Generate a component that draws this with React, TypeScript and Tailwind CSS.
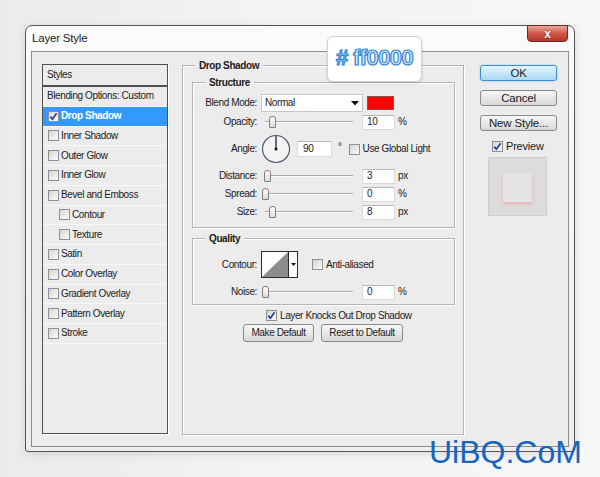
import React from 'react';

type Kid = { children?: React.ReactNode };

function Check({ checked = false }: { checked?: boolean }) {
  return (
    <span className="flex h-[11px] w-[11px] shrink-0 items-center justify-center border border-[#8f8f8f] bg-gradient-to-br from-[#d6d6d6] to-[#fbfbfb]">
      {checked && (
        <svg width="9" height="9" viewBox="0 0 9 9">
          <path d="M1.3 4.6 L3.4 7.2 L7.6 1.2" fill="none" stroke="#1f3f9a" strokeWidth="1.7" />
        </svg>
      )}
    </span>
  );
}

// thumb = px offset from slider's left edge
function Slider({ thumb }: { thumb: number }) {
  return (
    <div className="relative ml-[5px] h-[14px] w-[91px] shrink-0">
      <div className="absolute left-[3px] right-0 top-[6px] h-[2px] border-t border-b border-t-[#a9a9a9] border-b-white" />
      <div
        className="absolute top-[1px] h-[12px] w-[7px] rounded-t-[3px] rounded-b-[1px] border border-[#7d7d7d] bg-gradient-to-b from-white to-[#dcdcdc]"
        style={{ left: thumb }}
      />
    </div>
  );
}

function NumBox({ value }: { value: string }) {
  return (
    <div className="ml-[9px] flex h-[15px] w-[33px] shrink-0 items-center border border-[#dadada] border-t-[#b9b9b9] bg-white pl-[4px]">
      {value}
    </div>
  );
}

function Label({ children }: Kid) {
  return <span className="w-[64px] shrink-0 text-right">{children}</span>;
}

function Legend({ children }: Kid) {
  return <div className="-mt-[6px] ml-[12px] w-fit bg-[#ececec] px-[4px] font-bold">{children}</div>;
}

function SliderRow({ label, thumb, value, unit, mt }: { label: string; thumb: number; value: string; unit: string; mt: string }) {
  return (
    <div className={`flex h-[16px] items-center ${mt}`}>
      <Label>{label}</Label>
      <Slider thumb={thumb} />
      <NumBox value={value} />
      <span className="ml-[3px]">{unit}</span>
    </div>
  );
}

function Btn({ children, w }: Kid & { w: string }) {
  return (
    <div className={`flex h-[18px] items-center justify-center rounded-[3px] border border-[#8a8a8a] bg-gradient-to-b from-[#f6f6f6] via-[#e9e9e9] to-[#d6d6d6] ${w}`}>
      {children}
    </div>
  );
}

const styleRows: { name: string; indent?: boolean; on?: boolean }[] = [
  { name: 'Drop Shadow', on: true },
  { name: 'Inner Shadow' },
  { name: 'Outer Glow' },
  { name: 'Inner Glow' },
  { name: 'Bevel and Emboss' },
  { name: 'Contour', indent: true },
  { name: 'Texture', indent: true },
  { name: 'Satin' },
  { name: 'Color Overlay' },
  { name: 'Gradient Overlay' },
  { name: 'Pattern Overlay' },
  { name: 'Stroke' },
];

export default function App() {
  return (
    <div className="relative h-[477px] w-[600px] overflow-hidden bg-gradient-to-r from-[#ebebeb] via-[#f4f4f4] to-[#f7f7f7] pl-[25px] pt-[25px] text-[10px] leading-[12px] tracking-[-0.4px] text-[#1b1b1b] [font-family:'Liberation_Sans',Arial,sans-serif]">
      {/* Window */}
      <div className="flex h-[427px] w-[550px] flex-col rounded-t-[7px] rounded-b-[3px] border border-[#555] bg-gradient-to-b from-[#fbfbfb] to-[#ededed] shadow-[0_2px_8px_rgba(0,0,0,0.12)]">
        {/* Title bar */}
        <div className="flex h-[25px] shrink-0 items-start justify-between">
          <span className="pl-[6px] pt-[6px] text-[11.5px] leading-[13px] tracking-[-0.2px] text-[#222]">Layer Style</span>
          <div className="-mt-px mr-[6px] flex h-[17px] w-[41px] items-center justify-center rounded-b-[4px] border border-[#6b2a22] bg-gradient-to-b from-[#e8a89c] via-[#d0564a] to-[#b8352a] text-[12px] font-bold leading-[12px] text-white [text-shadow:0_0_2px_#5a1a12]">
            x
          </div>
        </div>

        {/* Content */}
        <div className="mx-[5px] flex h-[396px] items-start border border-[#8c8c8c] bg-[#ececec] pl-[10px] pt-[12px]">
          {/* Styles list */}
          <div className="flex h-[370px] w-[126px] shrink-0 flex-col border border-[#505050] shadow-[1px_1px_0_#fff]">
            <div className="flex h-[22px] shrink-0 items-center border-b-2 border-[#505050] pl-[4px]">Styles</div>
            <div className="flex h-[19.75px] shrink-0 items-center border-b border-[#f8f8f8] pl-[4px]">Blending Options: Custom</div>
            {styleRows.map((r) => (
              <div
                key={r.name}
                className={`flex h-[19.75px] shrink-0 items-center gap-[2px] border-b border-[#f8f8f8] ${r.indent ? 'pl-[16px]' : 'pl-[5px]'} ${r.on ? 'bg-[#3399ff] font-bold text-white' : ''}`}
              >
                <Check checked={r.on} />
                <span>{r.name}</span>
              </div>
            ))}
          </div>

          {/* Drop Shadow group */}
          <div className="ml-[14px] mt-[1px] flex h-[370px] w-[282px] shrink-0 flex-col border border-[#b4b4b4] shadow-[inset_1px_1px_0_#fff,1px_1px_0_#fff]">
            <Legend>Drop Shadow</Legend>

            {/* Structure */}
            <div className="ml-[9px] mt-[10px] flex h-[146px] w-[263px] flex-col border border-[#b4b4b4] shadow-[inset_1px_1px_0_#fff,1px_1px_0_#fff]">
              <Legend>Structure</Legend>

              <div className="mt-[5px] flex h-[18px] items-center">
                <Label>Blend Mode:</Label>
                <div className="ml-[4px] flex h-[18px] w-[102px] items-center justify-between border border-[#c6c6c6] bg-white pl-[3px] pr-[3px]">
                  <span>Normal</span>
                  <svg width="8" height="5" viewBox="0 0 8 5">
                    <path d="M0 0 H8 L4 4.5 Z" fill="#111" />
                  </svg>
                </div>
                <div className="ml-[4px] h-[14px] w-[27px] border border-[#8a5050] bg-[#ff0000]" />
              </div>

              <SliderRow label="Opacity:" thumb={7} value="10" unit="%" mt="mt-[2px]" />

              <div className="mt-[3px] flex h-[32px] items-center">
                <Label>Angle:</Label>
                <svg className="ml-[4px] shrink-0" width="30" height="30" viewBox="0 0 30 30">
                  <circle cx="15" cy="15" r="13.5" fill="#f3f3f3" stroke="#4a5672" strokeWidth="1.2" />
                  <line x1="15" y1="15" x2="15" y2="2" stroke="#111" strokeWidth="1.2" />
                  <circle cx="15" cy="15" r="1.5" fill="#111" />
                </svg>
                <div className="ml-[6px] flex h-[16px] w-[35px] items-center border border-[#dadada] border-t-[#b9b9b9] bg-white pl-[5px]">90</div>
                <span className="ml-[6px] -mt-[4px]">°</span>
                <span className="ml-[7px]"><Check /></span>
                <span className="ml-[3px]">Use Global Light</span>
              </div>

              <SliderRow label="Distance:" thumb={2} value="3" unit="px" mt="mt-[3px]" />
              <SliderRow label="Spread:" thumb={0} value="0" unit="%" mt="mt-[2px]" />
              <SliderRow label="Size:" thumb={7} value="8" unit="px" mt="mt-[2px]" />
            </div>

            {/* Quality */}
            <div className="ml-[9px] mt-[10px] flex h-[67px] w-[263px] flex-col border border-[#b4b4b4] shadow-[inset_1px_1px_0_#fff,1px_1px_0_#fff]">
              <Legend>Quality</Legend>

              <div className="mt-[6px] flex h-[27px] items-center">
                <Label>Contour:</Label>
                <div className="ml-[4px] flex h-[27px] w-[37px] border border-[#2a2a2a] bg-white">
                  <svg width="26" height="25" viewBox="0 0 26 25">
                    <polygon points="0,25 26,0 26,25" fill="#8c8c8c" />
                  </svg>
                  <div className="flex flex-1 items-center justify-center border-l border-[#2a2a2a]">
                    <svg width="5" height="3" viewBox="0 0 5 3">
                      <path d="M0 0 H5 L2.5 3 Z" fill="#111" />
                    </svg>
                  </div>
                </div>
                <span className="ml-[14px]"><Check /></span>
                <span className="ml-[3px]">Anti-aliased</span>
              </div>

              <SliderRow label="Noise:" thumb={0} value="0" unit="%" mt="mt-[6px]" />
            </div>

            <div className="ml-[83px] mt-[4px] flex h-[13px] items-center">
              <Check checked />
              <span className="ml-[3px]">Layer Knocks Out Drop Shadow</span>
            </div>

            <div className="ml-[60px] mt-[2px] flex gap-[7px]">
              <Btn w="w-[71px]">Make Default</Btn>
              <Btn w="w-[82px]">Reset to Default</Btn>
            </div>
          </div>

          {/* Right column */}
          <div className="ml-[16px] mt-[1px] flex w-[77px] shrink-0 flex-col text-[11.5px] tracking-[-0.2px]">
            <div className="flex h-[16px] items-center justify-center rounded-[3px] border border-[#3d8ed6] bg-gradient-to-b from-[#e4f4fd] to-[#a9d8f5] shadow-[0_0_2px_#7fc2f0]">OK</div>
            <div className="mt-[9px] flex h-[16px] items-center justify-center rounded-[3px] border border-[#8a8a8a] bg-gradient-to-b from-[#f6f6f6] to-[#d8d8d8]">Cancel</div>
            <div className="mt-[9px] flex h-[16px] items-center justify-center rounded-[3px] border border-[#8a8a8a] bg-gradient-to-b from-[#f6f6f6] to-[#d8d8d8]">New Style...</div>
            <div className="mt-[8px] flex h-[14px] items-center pl-[12px] text-[11px]">
              <Check checked />
              <span className="ml-[3px]">Preview</span>
            </div>
            <div className="ml-[8px] mt-[4px] flex h-[59px] w-[59px] items-center justify-center border border-[#cdcdcd] bg-[#dcdcdc]">
              <div className="mt-[2px] h-[29px] w-[29px] bg-[#e4e4e4] shadow-[0_2px_3px_rgba(255,90,90,0.35)]" />
            </div>
          </div>
        </div>
      </div>

      {/* Annotation label */}
      <div className="absolute left-[327px] top-[36px] flex h-[46px] w-[95px] items-start justify-center rounded-[6px] border border-[#d2d2d2] bg-white pt-[9px] shadow-[0_1px_3px_rgba(0,0,0,0.15)]">
        <span className="text-[22px] font-bold leading-[24px] tracking-[-0.6px] text-[#cfe8ff] [-webkit-text-stroke:1.2px_#2f86d8]">
          # ff0000
        </span>
      </div>

      {/* Watermark */}
      <div className="absolute left-[429px] top-[434px] text-[32px] leading-[36px] tracking-normal text-[#1565c0]">UiBQ.CoM</div>
    </div>
  );
}
